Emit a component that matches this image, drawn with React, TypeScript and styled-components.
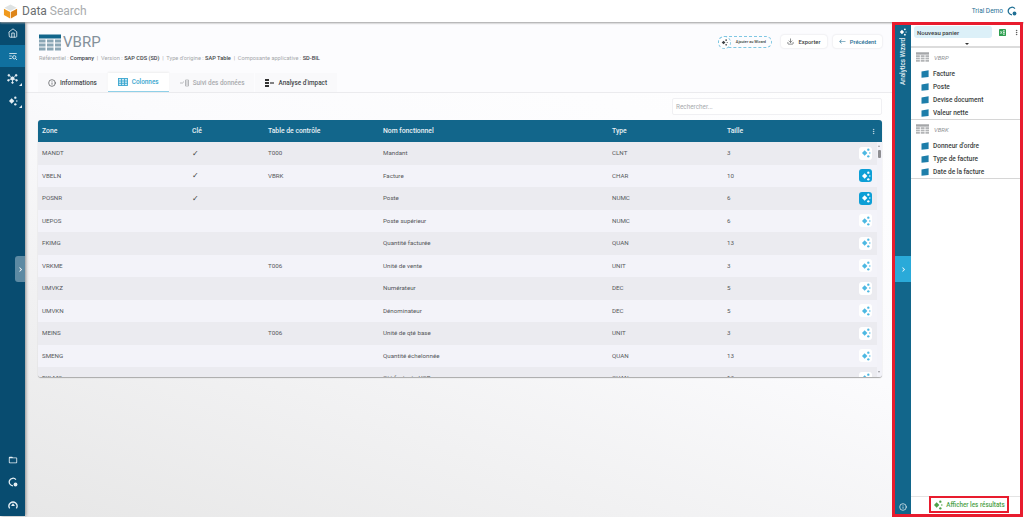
import { createGlobalStyle, styled } from "styled-components";
import { FiDownload, FiHome, FiInfo, FiMoreVertical } from "react-icons/fi";
import { BsArrowLeft } from "react-icons/bs";
import { MdChevronRight, MdOutlineFolderOpen } from "react-icons/md";
import { TbListSearch } from "react-icons/tb";

const GlobalStyle = createGlobalStyle`
  html, body { margin: 0; padding: 0; height: 100%; }
  body { font-family: Roboto, "Liberation Sans", sans-serif; overflow: hidden; background: #fff; }
  #root { height: 517px; width: 1024px; }
  * { box-sizing: border-box; }
`;

const Page = styled.div`
  height: 517px;
  width: 1024px;
  display: flex;
  flex-direction: column;
`;

const TopBar = styled.header`
  height: 22px;
  flex: none;
  display: flex;
  align-items: center;
  justify-content: space-between;
  padding: 0 6px 0 3px;
  background: #fff;
  box-shadow: 0 1px 2px #9a9a9a;
  position: relative;
  z-index: 3;
`;

const Brand = styled.div`
  display: flex;
  align-items: center;
  gap: 4px;
  font-size: 12px;
  color: #6b6e70;
  span { color: #a9acae; }
`;

const User = styled.div`
  display: flex;
  align-items: center;
  gap: 4px;
  font-size: 6.5px;
  color: #1f6f94;
  margin-right: 1px;
`;

const Body = styled.div`
  flex: 1;
  display: flex;
  min-height: 0;
`;

const SideNav = styled.nav`
  width: 25px;
  flex: none;
  background: #084c70;
  display: flex;
  flex-direction: column;
  box-shadow: 1px 0 3px #8e8e8e;
  position: relative;
  z-index: 2;
  margin-bottom: 1px;
`;

const NavItem = styled.div<{ $active?: boolean }>`
  height: 22.5px;
  display: flex;
  align-items: center;
  justify-content: center;
  color: #e6eff4;
  font-size: 10px;
  background: ${({ $active }) => ($active ? "#10709f" : "transparent")};
  position: relative;
`;

const NavCorner = styled.i`
  position: absolute;
  right: 3px;
  bottom: 4px;
  width: 0;
  height: 0;
  border-left: 3px solid transparent;
  border-bottom: 3px solid #e6eff4;
`;

const NavBottom = styled.div`
  margin-top: auto;
`;

const SideToggle = styled.div`
  position: absolute;
  left: 15px;
  top: 234px;
  width: 10px;
  height: 26px;
  border-radius: 3px 0 0 3px;
  background: #5d8aa3;
  color: #fff;
  display: flex;
  align-items: center;
  justify-content: center;
  font-size: 9px;
`;

const Main = styled.main`
  flex: 1;
  min-width: 0;
  background: linear-gradient(200deg, #ffffff 0%, #fbfbfd 45%, #e7e7e7 100%);
  display: flex;
  flex-direction: column;
`;

const Head = styled.div`
  height: 71px;
  flex: none;
  padding: 11px 10px 0 14px;
  border-bottom: 1px solid #ebebee;
  display: flex;
  justify-content: space-between;
  align-items: flex-start;
  background: #fcfcfe;
`;

const HeadLeft = styled.div`
  display: flex;
  flex-direction: column;
`;

const Title = styled.div`
  display: flex;
  align-items: center;
  gap: 2px;
  font-size: 15px;
  color: #83909a;
  height: 18px;
`;

const Meta = styled.div`
  margin-top: 4px;
  font-size: 5.65px;
  color: #a6a8ab;
  white-space: nowrap;
  b { color: #44474a; font-weight: 500; }
`;

const Tabs = styled.div`
  display: flex;
  gap: 1px;
  margin-top: 12px;
  margin-left: -1px;
`;

const Tab = styled.div<{ $active?: boolean; $muted?: boolean }>`
  height: 19px;
  padding: 0 10px;
  display: flex;
  align-items: center;
  gap: 4px;
  font-size: 6.4px;
  font-weight: 500;
  white-space: nowrap;
  color: ${({ $active, $muted }) => ($active ? "#3aa6cf" : $muted ? "#a9abae" : "#44474a")};
  background: ${({ $active }) => ($active ? "#fff" : "#f9f9fb")};
  border-bottom: ${({ $active }) => ($active ? "1px solid #8fd0e8" : "none")};
  box-shadow: ${({ $active }) => ($active ? "0 -1px 2px #eeeeee" : "none")};
`;

const Actions = styled.div`
  display: flex;
  align-items: center;
  gap: 6px;
  margin-top: 2px;
`;

const WizardChip = styled.div`
  height: 12px;
  width: 54px;
  margin-right: 3px;
  border: 1px dashed #7fc7e3;
  border-radius: 6px;
  font-size: 3.8px;
  font-weight: 500;
  color: #3c3f42;
  display: flex;
  align-items: center;
  justify-content: flex-end;
  padding-right: 5px;
  position: relative;
`;

const ChipIcon = styled.span`
  position: absolute;
  left: -1px;
  top: -1px;
  width: 13px;
  height: 13px;
  border-radius: 50%;
  border: 1px dashed #7fc7e3;
  background: #fff;
  display: flex;
  align-items: center;
  justify-content: center;
`;

const ActionButton = styled.div<{ $blue?: boolean; $w: number }>`
  height: 13px;
  width: ${({ $w }) => $w}px;
  background: #fff;
  border-radius: 3px;
  box-shadow: 0 0 2px #d8d8dc;
  display: flex;
  align-items: center;
  justify-content: center;
  gap: 4px;
  font-size: 5.8px;
  font-weight: 500;
  color: ${({ $blue }) => ($blue ? "#1f6f94" : "#3c3f42")};
`;

const SearchRow = styled.div`
  height: 23px;
  flex: none;
  display: flex;
  justify-content: flex-end;
  align-items: flex-end;
  padding: 0 10px 1px 0;
`;

const SearchBox = styled.div`
  width: 210px;
  height: 17px;
  background: #fff;
  border-radius: 2px;
  border: 1px solid #f0f0f3;
  font-size: 6.4px;
  color: #a8abae;
  display: flex;
  align-items: center;
  padding-left: 3px;
`;

const Table = styled.section`
  margin: 4px 10px 0 13px;
  height: 257px;
  flex: none;
  border-radius: 3px;
  overflow: hidden;
  background: #f2f2f8;
  box-shadow: 0 1px 1px #a8a8a8;
  display: flex;
  flex-direction: column;
`;

const columns = "150px 76px 115px 229px 115px 1fr";

const HeadRow = styled.div`
  height: 22px;
  flex: none;
  background: #12668b;
  color: #e8f1f5;
  display: grid;
  grid-template-columns: ${columns} 12px;
  align-items: center;
  font-size: 6.8px;
  font-weight: 500;
  padding-left: 4px;
`;

const TableBody = styled.div`
  flex: 1;
  min-height: 0;
  overflow: hidden;
  display: flex;
`;

const Rows = styled.div`
  flex: 1;
  min-width: 0;
`;

const Row = styled.div`
  height: 22.5px;
  display: grid;
  grid-template-columns: ${columns} 20px;
  align-items: center;
  font-size: 6.2px;
  color: #55585b;
  padding-left: 4px;
  background: #f3f3f9;
  &:nth-child(odd) { background: #ebebf0; }
`;

const Check = styled.span`
  font-size: 8px;
  color: #3c3f42;
`;

const RowAction = styled.div`
  display: flex;
  justify-content: flex-end;
  padding-right: 5px;
`;

const WizardButton = styled.div<{ $on?: boolean }>`
  width: 13px;
  height: 13px;
  border-radius: 3px;
  background: ${({ $on }) => ($on ? "#0d9fd6" : "#fff")};
  display: flex;
  align-items: center;
  justify-content: center;
`;

const ScrollTrack = styled.div`
  width: 5px;
  flex: none;
  position: relative;
  background: #f2f2f8;
`;

const ScrollThumb = styled.div`
  position: absolute;
  top: 8px;
  left: 1px;
  width: 3px;
  height: 8px;
  border-radius: 1px;
  background: #8e8e92;
`;

const ScrollArrow = styled.i<{ $down?: boolean }>`
  position: absolute;
  left: 1px;
  ${({ $down }) => ($down ? "bottom: 4px;" : "top: 3px;")}
  width: 0;
  height: 0;
  border-left: 1.5px solid transparent;
  border-right: 1.5px solid transparent;
  ${({ $down }) => ($down ? "border-top: 2px solid #9a9a9e;" : "border-bottom: 2px solid #9a9a9e;")}
`;

const Wizard = styled.aside`
  width: 131px;
  flex: none;
  background: #fff;
  border: 3px solid #e81c2e;
  margin-right: 1px;
  display: flex;
  position: relative;
  z-index: 4;
`;

const WizardStrip = styled.div`
  width: 16px;
  flex: none;
  background: #12668b;
  display: flex;
  flex-direction: column;
  align-items: center;
  color: #fff;
  padding-top: 3px;
`;

const StripLabel = styled.div`
  writing-mode: vertical-rl;
  transform: rotate(180deg);
  font-size: 6.3px;
  font-weight: 500;
  margin-top: 2px;
  white-space: nowrap;
  color: #e8f1f5;
`;

const StripToggle = styled.div`
  position: absolute;
  left: 0;
  top: 231px;
  width: 16px;
  height: 26px;
  background: #2aaad9;
  color: #fff;
  display: flex;
  align-items: center;
  justify-content: center;
  font-size: 9px;
`;

const StripInfo = styled.div`
  margin-top: auto;
  padding-bottom: 3px;
  font-size: 8px;
  display: flex;
`;

const Basket = styled.div`
  flex: 1;
  min-width: 0;
  display: flex;
  flex-direction: column;
`;

const BasketHead = styled.div`
  height: 23px;
  flex: none;
  display: flex;
  align-items: flex-start;
  padding: 1px 0 0 3px;
  gap: 7px;
  position: relative;
  border-bottom: 2px solid #dcdcdc;
`;

const BasketTool = styled.span`
  height: 12px;
  display: flex;
  align-items: center;
`;

const BasketName = styled.div`
  width: 78px;
  height: 12px;
  background: #dcf0f8;
  border-radius: 3px;
  font-size: 6px;
  font-weight: 500;
  color: #3c3f42;
  display: flex;
  align-items: center;
  padding-left: 3px;
`;

const BasketCaret = styled.i`
  position: absolute;
  left: 54px;
  bottom: 1px;
  width: 0;
  height: 0;
  border-left: 2px solid transparent;
  border-right: 2px solid transparent;
  border-top: 2px solid #333;
`;

const Group = styled.div`
  border-bottom: 1px solid #d6d6d6;
  padding: 3px 0 0 5px;
`;

const GroupTitle = styled.div`
  display: flex;
  align-items: center;
  gap: 5px;
  height: 12px;
  font-size: 6px;
  font-style: italic;
  color: #8e9194;
  margin-bottom: 4px;
`;

const Field = styled.div`
  height: 13px;
  display: flex;
  align-items: center;
  gap: 4px;
  padding-left: 5px;
  font-size: 6.5px;
  font-weight: 500;
  color: #3c3f42;
`;

const BasketFooter = styled.div`
  margin-top: auto;
  height: 18px;
  flex: none;
  border-top: 1px solid #e4e4e4;
  display: flex;
  align-items: flex-start;
  justify-content: flex-end;
  padding-right: 11px;
`;

const ShowResults = styled.div`
  width: 80px;
  height: 17px;
  margin-top: -1px;
  border: 2px solid #e81c2e;
  display: flex;
  align-items: center;
  justify-content: center;
  gap: 3px;
  font-size: 6.3px;
  font-weight: 500;
  color: #4ea24a;
  white-space: nowrap;
`;

const TableIcon = ({ w, h, head, cell }: { w: number; h: number; head: string; cell: string }) => (
  <svg width={w} height={h} viewBox="0 0 22 16">
    <rect width="22" height="4" fill={head} />
    {[5, 9, 13].map((y) =>
      [0, 8, 16].map((x) => <rect key={`${x}-${y}`} x={x} y={y} width="6.5" height="3" fill={cell} />)
    )}
  </svg>
);

const Spark = ({ color, size = 10 }: { color: string; size?: number }) => (
  <svg width={size} height={size} viewBox="0 0 12 12">
    <path d="M4.4 2.8 7.6 6 4.4 9.2 1.2 6Z" fill={color} />
    <circle cx="8.8" cy="2" r="1.4" fill={color} />
    <circle cx="10.6" cy="6" r="0.9" fill={color} />
    <circle cx="8.8" cy="10" r="1.4" fill={color} />
  </svg>
);

const NetworkIcon = () => (
  <svg width="11" height="11" viewBox="0 0 12 12" fill="#e6eff4" stroke="#e6eff4" strokeWidth="0.8">
    <path d="M6 6 2 2.5M6 6 10 2.5M6 6 1.5 8M6 6 10.5 8M6 6V10.5" />
    <circle cx="6" cy="6" r="1.8" />
    <circle cx="2" cy="2.5" r="1" />
    <circle cx="10" cy="2.5" r="1" />
    <circle cx="1.5" cy="8" r="0.9" />
    <circle cx="10.5" cy="8" r="0.9" />
    <circle cx="6" cy="10.5" r="0.9" />
  </svg>
);

const FieldIcon = () => (
  <svg width="8" height="8" viewBox="0 0 8 8">
    <path d="M0.5 1.4 7.6 0.3V7L0.5 7.8Z" fill="#1d7eaa" />
  </svg>
);

const CubeLogo = () => (
  <svg width="15" height="15" viewBox="0 0 16 16">
    <path d="M8 0.5 14.5 4 8 7.4 1.5 4Z" fill="#dfe3e3" />
    <path d="M1 5 7.6 8.4V15.5L1 11.6Z" fill="#f09a1e" />
    <path d="M15 5 8.4 8.4V15.5L15 11.6Z" fill="#dd851a" />
  </svg>
);

const SupportIcon = ({ color }: { color: string }) => (
  <svg width="10" height="10" viewBox="0 0 12 12" fill="none">
    <path d="M9.5 3.2A4.5 4.5 0 1 0 6 10.5" stroke={color} strokeWidth="1.5" />
    <circle cx="9" cy="9" r="2.3" fill={color} />
  </svg>
);

const GaugeIcon = () => (
  <svg width="10" height="10" viewBox="0 0 12 12" fill="none">
    <path d="M2 10A4.8 4.8 0 1 1 10 10" stroke="#e6eff4" strokeWidth="1.6" />
    <path d="M6 4 8.4 7.2H3.6Z" fill="#e6eff4" />
  </svg>
);

const ExcelIcon = () => (
  <svg width="7" height="7" viewBox="0 0 8 8">
    <rect width="8" height="8" rx="1" fill="#2f9e50" />
    <path d="M4.6 1.5h2v1.4h-2ZM4.6 3.4h2v1.4h-2ZM4.6 5.3h2v1.4h-2Z" fill="#d8f0df" />
    <path d="M1.6 2.4 3.6 5.6M3.6 2.4 1.6 5.6" stroke="#fff" strokeWidth="0.7" />
  </svg>
);

const GridIcon = () => (
  <svg width="10" height="8" viewBox="0 0 10 8" fill="none" stroke="#3aa6cf" strokeWidth="0.9">
    <rect x="0.5" y="0.5" width="9" height="7" fill="#cdeaf5" />
    <path d="M0.5 3h9M0.5 5.3h9M3.5 0.5v7M6.5 0.5v7" />
  </svg>
);

const LineageIcon = () => (
  <svg width="9" height="8" viewBox="0 0 9 8" fill="none" stroke="#a9abae" strokeWidth="0.8">
    <path d="M0 4h3M3 3h1M5.5 1h3v6h-3ZM5.5 3h3M5.5 5h3" />
  </svg>
);

const ImpactIcon = () => (
  <svg width="9" height="8" viewBox="0 0 9 8" fill="#333">
    <rect x="0" y="0" width="4" height="2" />
    <rect x="0" y="3" width="4" height="2" />
    <rect x="0" y="6" width="4" height="2" />
    <rect x="5" y="3.4" width="4" height="1.2" />
  </svg>
);

const rows = [
  ["MANDT", true, "T000", "Mandant", "CLNT", "3", false],
  ["VBELN", true, "VBRK", "Facture", "CHAR", "10", true],
  ["POSNR", true, "", "Poste", "NUMC", "6", true],
  ["UEPOS", false, "", "Poste supérieur", "NUMC", "6", false],
  ["FKIMG", false, "", "Quantité facturée", "QUAN", "13", false],
  ["VRKME", false, "T006", "Unité de vente", "UNIT", "3", false],
  ["UMVKZ", false, "", "Numérateur", "DEC", "5", false],
  ["UMVKN", false, "", "Dénominateur", "DEC", "5", false],
  ["MEINS", false, "T006", "Unité de qté base", "UNIT", "3", false],
  ["SMENG", false, "", "Quantité échelonnée", "QUAN", "13", false],
  ["FKLMG", false, "", "Qté facturée UQB", "QUAN", "13", false],
] as const;

const App = () => (
  <Page>
    <GlobalStyle />
    <TopBar>
      <Brand>
        <CubeLogo />
        <div>
          Data <span>Search</span>
        </div>
      </Brand>
      <User>
        Trial Demo
        <SupportIcon color="#1f6f94" />
      </User>
    </TopBar>
    <Body>
      <SideNav>
        <NavItem>
          <FiHome />
        </NavItem>
        <NavItem $active>
          <TbListSearch />
        </NavItem>
        <NavItem>
          <NetworkIcon />
          <NavCorner />
        </NavItem>
        <NavItem>
          <Spark color="#e6eff4" />
          <NavCorner />
        </NavItem>
        <NavBottom>
          <NavItem>
            <MdOutlineFolderOpen />
          </NavItem>
          <NavItem>
            <SupportIcon color="#e6eff4" />
          </NavItem>
          <NavItem>
            <GaugeIcon />
          </NavItem>
        </NavBottom>
        <SideToggle>
          <MdChevronRight />
        </SideToggle>
      </SideNav>
      <Main>
        <Head>
          <HeadLeft>
            <Title>
              <TableIcon w={22} h={17} head="#12668b" cell="#8aa6b5" />
              VBRP
            </Title>
            <Meta>
              Référentiel : <b>Company</b> &nbsp;|&nbsp; Version : <b>SAP CDS (SD)</b> &nbsp;|&nbsp; Type d'origine : <b>SAP Table</b> &nbsp;|&nbsp; Composante applicative : <b>SD-BIL</b>
            </Meta>
            <Tabs>
              <Tab>
                <FiInfo size={8} />
                Informations
              </Tab>
              <Tab $active>
                <GridIcon />
                Colonnes
              </Tab>
              <Tab $muted>
                <LineageIcon />
                Suivi des données
              </Tab>
              <Tab>
                <ImpactIcon />
                Analyse d'impact
              </Tab>
            </Tabs>
          </HeadLeft>
          <Actions>
            <WizardChip>
              <ChipIcon>
                <Spark color="#3c3f42" size={7} />
              </ChipIcon>
              Ajouter au Wizard
            </WizardChip>
            <ActionButton $w={46}>
              <FiDownload size={7} />
              Exporter
            </ActionButton>
            <ActionButton $blue $w={49}>
              <BsArrowLeft size={7} />
              Précédent
            </ActionButton>
          </Actions>
        </Head>
        <SearchRow>
          <SearchBox>Rechercher...</SearchBox>
        </SearchRow>
        <Table>
          <HeadRow>
            <div>Zone</div>
            <div>Clé</div>
            <div>Table de contrôle</div>
            <div>Nom fonctionnel</div>
            <div>Type</div>
            <div>Taille</div>
            <FiMoreVertical size={7} />
          </HeadRow>
          <TableBody>
            <Rows>
              {rows.map(([zone, key, check, name, type, size, on]) => (
                <Row key={zone}>
                  <div>{zone}</div>
                  <div>{key && <Check>✓</Check>}</div>
                  <div>{check}</div>
                  <div>{name}</div>
                  <div>{type}</div>
                  <div>{size}</div>
                  <RowAction>
                    <WizardButton $on={on}>
                      <Spark color={on ? "#fff" : "#4db8e2"} />
                    </WizardButton>
                  </RowAction>
                </Row>
              ))}
            </Rows>
            <ScrollTrack>
              <ScrollArrow />
              <ScrollThumb />
              <ScrollArrow $down />
            </ScrollTrack>
          </TableBody>
        </Table>
      </Main>
      <Wizard>
        <WizardStrip>
          <Spark color="#fff" size={8} />
          <StripLabel>Analytics Wizard</StripLabel>
          <StripToggle>
            <MdChevronRight />
          </StripToggle>
          <StripInfo>
            <FiInfo />
          </StripInfo>
        </WizardStrip>
        <Basket>
          <BasketHead>
            <BasketName>Nouveau panier</BasketName>
            <BasketTool>
              <ExcelIcon />
            </BasketTool>
            <BasketTool>
              <FiMoreVertical size={7} color="#333" />
            </BasketTool>
            <BasketCaret />
          </BasketHead>
          <Group>
            <GroupTitle>
              <TableIcon w={13} h={10} head="#a5a7a9" cell="#b2b4b6" />
              VBRP
            </GroupTitle>
            {["Facture", "Poste", "Devise document", "Valeur nette"].map((f) => (
              <Field key={f}>
                <FieldIcon />
                {f}
              </Field>
            ))}
          </Group>
          <Group>
            <GroupTitle>
              <TableIcon w={13} h={10} head="#a5a7a9" cell="#b2b4b6" />
              VBRK
            </GroupTitle>
            {["Donneur d'ordre", "Type de facture", "Date de la facture"].map((f) => (
              <Field key={f}>
                <FieldIcon />
                {f}
              </Field>
            ))}
          </Group>
          <BasketFooter>
            <ShowResults>
              <Spark color="#4ea24a" />
              Afficher les résultats
            </ShowResults>
          </BasketFooter>
        </Basket>
      </Wizard>
    </Body>
  </Page>
);

export default App;
